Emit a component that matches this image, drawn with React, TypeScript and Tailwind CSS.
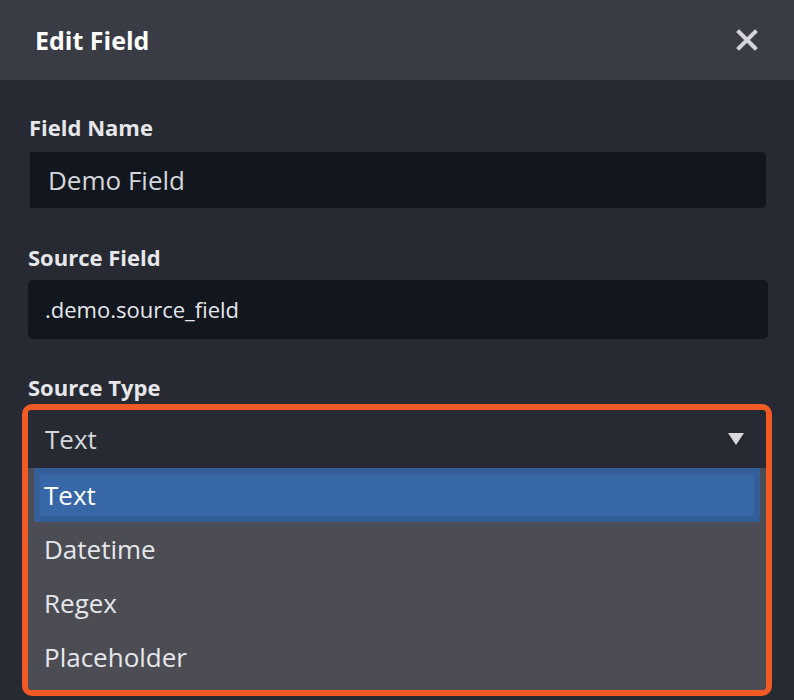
import React from "react";

const font = { fontFamily: '"Open Sans", "Noto Sans", sans-serif' };

export default function App() {
  const items = ["Text", "Datetime", "Regex", "Placeholder"];
  return (
    <div className="w-[794px] h-[700px] overflow-hidden bg-[#272a32]" style={font}>
      <div className="h-[80px] bg-[#393c45] flex items-center justify-between pl-[35px] pr-[36px]">
        <h2 className="text-[25px] font-bold text-white leading-none">Edit Field</h2>
        <svg width="22" height="22" viewBox="0 0 22 22">
          <path d="M3 3 L19 19 M19 3 L3 19" stroke="#d4d5da" strokeWidth="4" strokeLinecap="square" />
        </svg>
      </div>
      <div className="px-[28px] pt-[33px]">
        <div className="text-[22px] font-bold text-[#e5e7eb] leading-[28px] ml-[1px]">Field Name</div>
        <div className="mt-[11px] ml-[2px] w-[736px] h-[56px] bg-[#12161f] rounded-r-[4px] flex items-center pl-[18px] text-[26px] text-[#d4d6db]">
          Demo Field
        </div>
        <div className="mt-[35px] text-[22px] font-bold text-[#e5e7eb] leading-[28px]">Source Field</div>
        <div className="mt-[9px] w-[740px] h-[59px] bg-[#12161f] rounded-[5px] flex items-center pl-[17px] text-[22px] text-[#e5e7eb]">
          .demo.source_field
        </div>
        <div className="mt-[34px] text-[22px] font-bold text-[#e5e7eb] leading-[28px]">Source Type</div>
        <div className="-mx-[6px] mt-[3px] border-[6px] border-[#f15a24] rounded-[10px] overflow-hidden">
          <div className="h-[58px] bg-[#272a33] flex items-center justify-between pl-[17px] pr-[22px]">
            <span className="text-[26px] text-[#d4d6db]">Text</span>
            <svg width="16" height="12" viewBox="0 0 16 12">
              <path d="M0 0 L16 0 L8 12 Z" fill="#d8d9dd" />
            </svg>
          </div>
          <div className="bg-[#4c4c55] pb-[6px]">
            {items.map((it, i) =>
              i === 0 ? (
                <div key={it} className="mx-[6px] h-[54px] bg-[#3767a6] border-[6px] border-[#345e97] flex items-center pl-[4px] text-[26px] text-white">
                  {it}
                </div>
              ) : (
                <div key={it} className="h-[54px] flex items-center pl-[16px] text-[26px] text-[#e5e7eb]">
                  {it}
                </div>
              )
            )}
          </div>
        </div>
      </div>
    </div>
  );
}
